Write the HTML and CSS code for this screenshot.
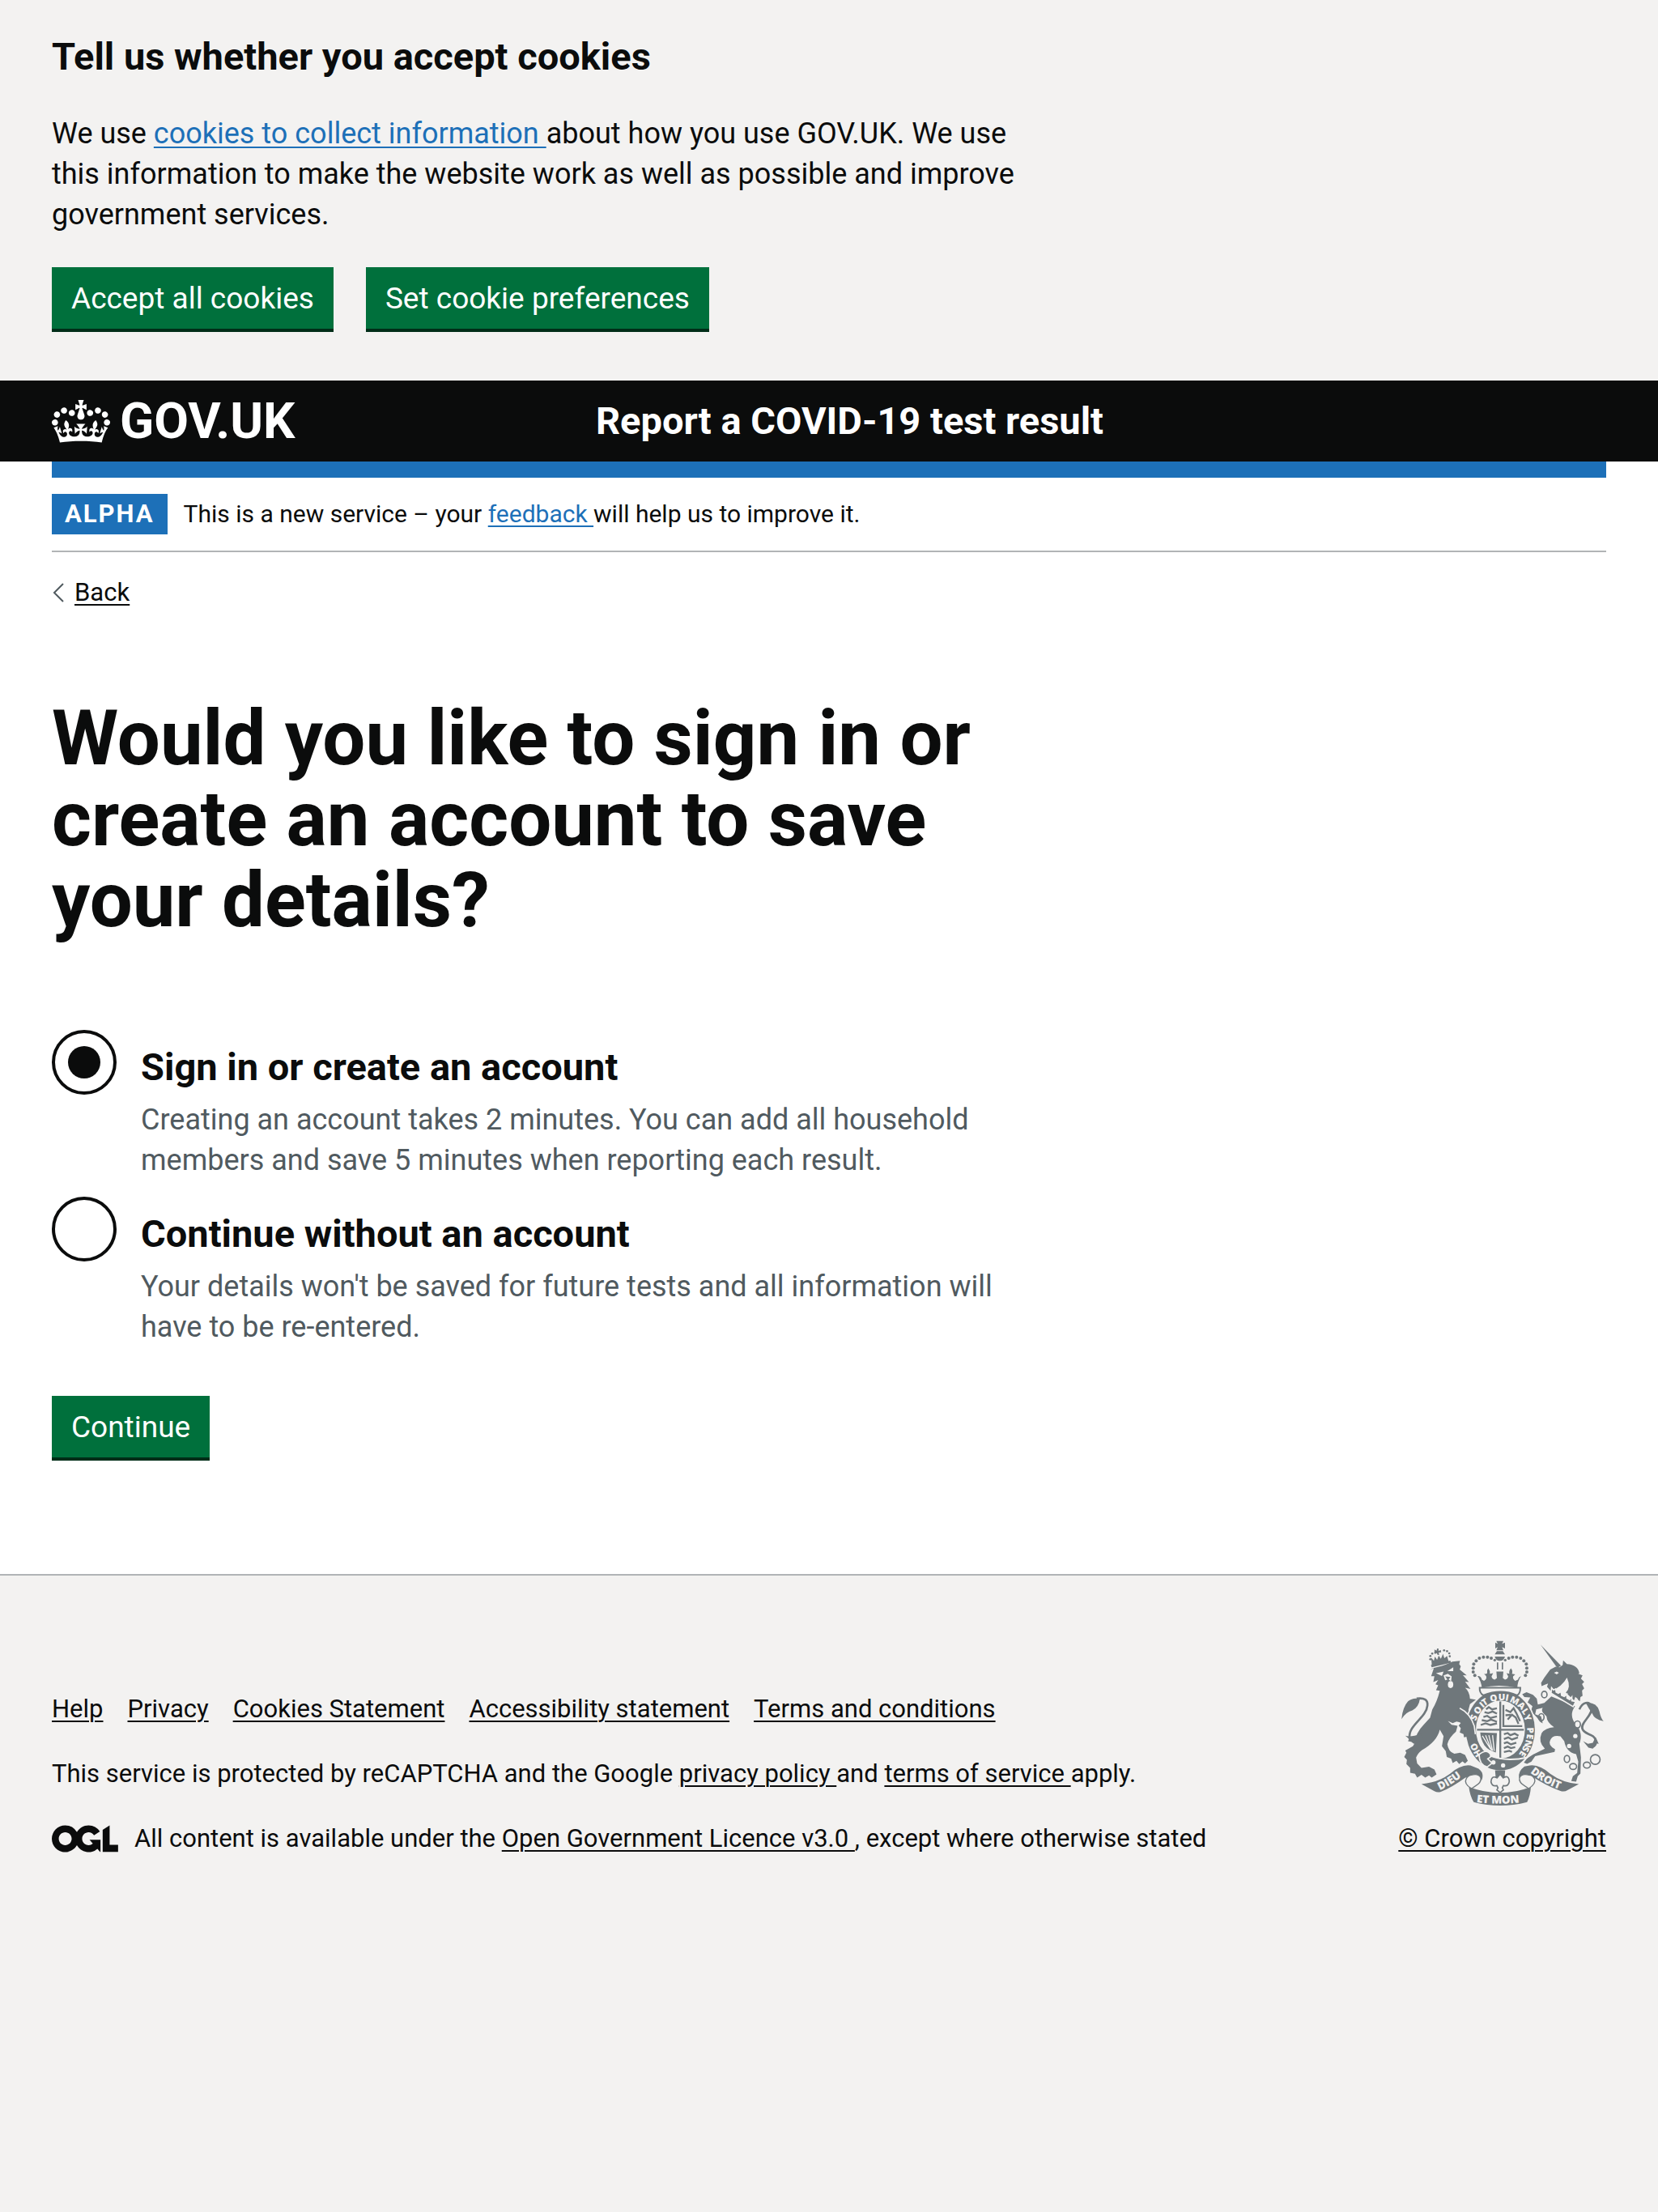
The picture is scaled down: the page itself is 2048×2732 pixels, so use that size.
FILE: index.html
```html
<!DOCTYPE html>
<html lang="en">
<head>
<meta charset="utf-8">
<meta name="viewport" content="width=device-width, initial-scale=1">
<title>Would you like to sign in or create an account to save your details? - GOV.UK</title>
<link rel="stylesheet" href="styles.css">
</head>
<body>
<section class="cookie-banner container" aria-label="Cookie banner">
  <h2 class="heading-m">Tell us whether you accept cookies</h2>
  <p class="body two-thirds">We use <a class="link" href="#">cookies to collect information </a>about how you use GOV.UK. We use this information to make the website work as well as possible and improve government services.</p>
  <div class="button-row">
    <button class="button" type="button">Accept all cookies</button>
    <button class="button" type="button">Set cookie preferences</button>
  </div>
</section>

<header class="header">
  <div class="header-inner container">
    <a class="logo" href="#">
      <svg class="crown" viewBox="0 0 132 97" aria-hidden="true"><path fill="currentColor" fill-rule="evenodd" d="M25 30.2c3.5 1.5 7.7-.2 9.1-3.7 1.5-3.6-.2-7.8-3.9-9.2-3.6-1.4-7.6.3-9.1 3.9-1.4 3.5.3 7.5 3.9 9zM9 39.5c3.6 1.5 7.8-.2 9.2-3.7 1.5-3.6-.2-7.8-3.9-9.1-3.6-1.5-7.6.2-9.1 3.8-1.4 3.5.3 7.5 3.8 9zM4.4 57.2c3.5 1.5 7.7-.2 9.1-3.8 1.5-3.6-.2-7.7-3.9-9.1-3.5-1.5-7.6.3-9.1 3.8-1.4 3.5.3 7.6 3.9 9.1zm38.3-21.4c3.5 1.5 7.7-.2 9.1-3.8 1.5-3.6-.2-7.7-3.9-9.1-3.6-1.5-7.6.3-9.1 3.8-1.3 3.6.4 7.7 3.9 9.1zm64.4-5.6c-3.6 1.5-7.8-.2-9.1-3.7-1.5-3.6.2-7.8 3.8-9.2 3.6-1.4 7.7.3 9.2 3.9 1.3 3.5-.4 7.5-3.9 9zm15.9 9.3c-3.6 1.5-7.7-.2-9.1-3.7-1.5-3.6.2-7.8 3.7-9.1 3.6-1.5 7.7.2 9.2 3.8 1.5 3.5-.3 7.5-3.8 9zm4.7 17.7c-3.6 1.5-7.8-.2-9.2-3.8-1.5-3.6.2-7.7 3.9-9.1 3.6-1.5 7.7.3 9.2 3.8 1.3 3.5-.4 7.6-3.9 9.1zM89.3 35.8c-3.6 1.5-7.8-.2-9.2-3.8-1.4-3.6.2-7.7 3.9-9.1 3.6-1.5 7.7.3 9.2 3.8 1.4 3.6-.3 7.7-3.9 9.1zM69.7 17.7l8.9 4.7V9.3l-8.9 2.8c-.2-.3-.5-.6-.9-.9L72.4 0H59.6l3.5 11.2c-.3.3-.6.5-.9.9l-8.8-2.8v13.1l8.8-4.7c.3.3.6.7.9.9l-5 15.4v.1c-.2.8-.4 1.6-.4 2.4 0 4.1 3.1 7.5 7 8.1h.2c.3 0 .7.1 1 .1.4 0 .7 0 1-.1h.2c4-.6 7.1-4.1 7.1-8.1 0-.8-.1-1.7-.4-2.4V34l-5.1-15.4c.4-.2.7-.6 1-.9zM66 92.8c16.9 0 32.8 1.1 47.1 3.2 4-16.9 8.9-26.7 14-33.5l-9.6-3.4c1 4.9 1.1 7.2 0 10.2-1.5-1.4-3-4.3-4.2-8.7L108.6 76c2.8-2 5-3.2 7.5-3.3-4.4 9.4-10 11.9-13.6 11.2-4.3-.8-6.3-4.6-5.6-7.9 1-4.7 5.7-5.9 8-.5 4.3-8.7-3-11.4-7.6-8.8 7.1-7.2 7.9-13.5 2.1-21.1-8 6.1-8.1 12.3-4.5 20.8-4.7-5.4-12.1-2.5-9.5 6.2 3.4-5.2 7.9-2 7.2 3.1-.6 4.3-6.4 7.8-13.5 7.2-10.3-.9-10.9-8-11.2-13.8 2.5-.5 7.1 1.8 11 7.3L80.2 60c-4.1 4.4-8 5.3-12.3 5.4 1.4-4.4 8-11.6 8-11.6H55.5s6.4 7.2 7.9 11.6c-4.2-.1-8-1-12.3-5.4l1.4 16.4c3.9-5.5 8.5-7.7 10.9-7.3-.3 5.8-.9 12.8-11.1 13.8-7.2.6-12.9-2.9-13.5-7.2-.7-5 3.8-8.3 7.1-3.1 2.7-8.7-4.6-11.6-9.4-6.2 3.7-8.5 3.6-14.7-4.6-20.8-5.8 7.6-5 13.9 2.2 21.1-4.7-2.6-11.9.1-7.7 8.8 2.3-5.5 7.1-4.2 8.1.5.7 3.3-1.3 7.1-5.7 7.9-3.5.7-9-1.8-13.5-11.2 2.5.1 4.7 1.3 7.5 3.3l-4.7-15.4c-1.2 4.4-2.7 7.2-4.3 8.7-1.1-3-.9-5.3 0-10.2l-9.5 3.4c5 6.9 9.9 16.7 14 33.5 14.8-2.1 30.8-3.2 47.7-3.2z"/></svg>
      <span>GOV.UK</span>
    </a>
    <a class="service-name" href="#">Report a COVID-19 test result</a>
  </div>
</header>

<div class="page">
  <div class="container">
    <div class="phase-banner">
      <strong class="tag">ALPHA</strong>
      <p class="phase-text">This is a new service – your <a class="link" href="#">feedback </a>will help us to improve it.</p>
    </div>
    <a class="back-link body-s" href="#">
      <svg class="back-icon" viewBox="0 0 16 24" aria-hidden="true"><path d="M14 1L3 12l11 11" fill="none" stroke="#505a5f" stroke-width="2"/></svg>
      <span>Back</span>
    </a>
    <main class="main two-thirds">
      <form>
        <fieldset class="fieldset">
          <legend><h1 class="heading-xl">Would you like to sign in or create an account to save your details?</h1></legend>
          <div class="radios">
            <div class="radio-item">
              <input class="radio" type="radio" name="account" id="sign-in" aria-describedby="sign-in-hint" checked>
              <div class="radio-text">
                <label class="heading-m" for="sign-in">Sign in or create an account</label>
                <p class="body hint" id="sign-in-hint">Creating an account takes 2 minutes. You can add all household members and save 5 minutes when reporting each result.</p>
              </div>
            </div>
            <div class="radio-item">
              <input class="radio" type="radio" name="account" id="no-account" aria-describedby="no-account-hint">
              <div class="radio-text">
                <label class="heading-m" for="no-account">Continue without an account</label>
                <p class="body hint" id="no-account-hint">Your details won't be saved for future tests and all information will have to be re-entered.</p>
              </div>
            </div>
          </div>
        </fieldset>
        <button class="button" type="button">Continue</button>
      </form>
    </main>
  </div>
</div>

<footer class="footer">
  <div class="footer-inner container">
    <div class="footer-meta">
      <ul class="footer-links body-s">
        <li><a href="#">Help</a></li>
        <li><a href="#">Privacy</a></li>
        <li><a href="#">Cookies Statement</a></li>
        <li><a href="#">Accessibility statement</a></li>
        <li><a href="#">Terms and conditions</a></li>
      </ul>
      <p class="body-s">This service is protected by reCAPTCHA and the Google <a href="#">privacy policy </a>and <a href="#">terms of service </a>apply.</p>
      <div class="licence">
        <svg class="ogl" viewBox="0 0 484 196" role="img" aria-label="Open Government Licence"><path fill="currentColor" d="M421.500 142.800V.1l-50.700 32.300v161.100h112.400v-50.700zm-122.300-9.600A47.120 47.120 0 0 1 221 97.800c0-26 21.100-47.100 47.100-47.100 16.700 0 31.400 8.700 39.700 21.800l42.700-27.200A97.630 97.630 0 0 0 268.100 0c-36.500 0-68.300 20.100-85.100 49.700A98 98 0 0 0 97.800 0C43.900 0 0 43.900 0 97.800s43.900 97.800 97.800 97.800c36.500 0 68.300-20.100 85.100-49.700a97.760 97.760 0 0 0 149.600 25.400l19.400 22.200h3v-87.800h-80l24.300 27.500zM97.800 145c-26 0-47.100-21.100-47.100-47.100s21.100-47.100 47.100-47.100 47.100 21.100 47.100 47.100S123.800 145 97.800 145"/></svg>
        <p class="body-s">All content is available under the <a href="#">Open Government Licence v3.0 </a>, except where otherwise stated</p>
      </div>
    </div>
    <a class="copyright body-s" href="#">
      <svg class="crest" viewBox="84 46 750 616" aria-hidden="true">
        <defs>
          <path id="ribbon-left" d="M226 602Q278 578 330 534"/>
          <path id="ribbon-mid" d="M362 647Q450 658 560 644"/>
          <path id="ribbon-right" d="M561 536Q618 584 690 605"/>
        </defs>
        <!-- lion -->
        <g fill="#6f777b">
          <path d="M193 138l72-17 3 8-72 17z"/>
          <path d="M196 132l-2-22 10 12 4-16 8 12 6-16 8 12 8-18 5 16 10-8 6 22-63 14z"/>
          <path d="M206 80l8 4 2-8 6 1-1 8 9-3 1 8-9 1 2 8-6 1-3-7-8 3z"/>
          <circle cx="191" cy="116" r="4"/><circle cx="191" cy="104" r="4"/><circle cx="198" cy="95" r="4"/><circle cx="209" cy="91" r="4"/><circle cx="242" cy="83" r="4"/><circle cx="253" cy="86" r="4"/><circle cx="261" cy="94" r="4"/><circle cx="263" cy="105" r="4"/>
          <path d="M189 156l12-7q40-8 72-24l28-3-3 12 6 8-4 12 26 22-14-1 22 26-14-2 20 27-20-4q16 14 18 40l22 4-22 17-6 22q20 10 24 30 14 16 16 44l-8 12 2 26-16-4-12 8-4-14-18-4 4-16-10-8 10-14q-10-14-32-18l-14 6-18-8 14 14 22 4-6 22q-26 22-32 46 4 28 26 36l22-4 18 8 10 22-10 10-10-8-12 10-10-12-14 8-6-16-16-6-4-22-14-18 6-38-14-24q-10 44-66 76-16 12-22 28l4 22 16 16 28-4 20 10 8 18-18 12-10-8-14 8-14-10-16 10-8-14-18-4 0-18-14-14 2-16-10-10 8-16-4-8 28-16 6-10q4-40 34-70l24-26 8-30q18-30 28-70l-14-2 8-18-10-4 10-16-18 8 4-22-12 0 10-30z"/>
          <path d="M98 400q22 6 58-8l6 16q-4 16-32 22l-10-8-12-2 4-8z"/>
          <path d="M84 338q4-44 24-66 20-16 44-8-4 30-28 42-24 6-40 32z"/>
          <path d="M140 262q44-6 40 26c-4 46-74 74-66 122q8 10 24 6" fill="none" stroke="#6f777b" stroke-width="8"/>
          <g fill="#f3f2f1">
            <path d="M212 168l28-6-6 16zM254 160l22-14 0 14zM240 176l16-6 14 10-2 18-10-8-12 4z"/>
            <ellipse cx="266" cy="210" rx="10" ry="13"/>
          </g>
          <path d="M246 180l20 2-10 12z"/>
        </g>
        <!-- unicorn -->
        <g fill="#6f777b">
          <path d="M600 62l76 78-14 8z"/>
          <path d="M614 184l22-30 20-10 14 2 12-8 2-18 14 14q40 2 46 34l-4 2 16 6-6 12 12 12-8 8 8 16-8 8 2 20-8 4-2 16-10-8-12 4-30-28q20-20 4-56-18 34-60 50l-14-16 4-12-10 4-14 6-2-12z"/>
          <path d="M640 254l88 36q-24 34 2 66 30 34 14 74l6 50-2 60-10 10-6 20-18-2 6-18 16-12 4-42-8-28q-36-6-44-48l-14-18q-30-6-38 14-10 18 18 34l-2 10-72 16-14 20-16 8-12-4 12-16 22-14 44-22q-26-26-12-58 14-20 46-22-26-16-28-40l-12-12q-8-10-2-20l-24 6-4 18 22 8 6 26-10-6-10-14-24-26 6-18-18-14 10-18-22-2-8-10 16-8 24 10 14 14 4 22 24-6z"/>
          <path d="M641 222l-2 20 82 50 14-28-5-4-4 12-10-2 0-14-8 10-10-6 0-14-10 8-10-4-2-14-10 6-8-4-2-12-8 4z" fill="#6f777b" stroke="#f3f2f1" stroke-width="5"/>
          <path d="M744 302c12-26 36-34 46-10 6 34-46 60-34 84 8 22 46 14 50 46q0 14-14 20" fill="none" stroke="#6f777b" stroke-width="8"/>
          <path d="M768 278q40-4 50 30 6 28 16 38-34-6-42-28-14-20-24-40zM758 420l18 10 18-4 10-22 12 26-8-2-14 20-16-4z"/>
        </g>
        <g fill="#f3f2f1"><circle cx="729" cy="401" r="8"/><circle cx="706" cy="438" r="8"/><circle cx="597" cy="270" r="7"/><path d="M650 166l10-4 8 4-8 6z"/></g>
        <g fill="none" stroke="#6f777b" stroke-width="5">
          <ellipse cx="614" cy="247" rx="10" ry="12"/><ellipse cx="603" cy="331" rx="10" ry="13"/><ellipse cx="737" cy="358" rx="11" ry="13" fill="#f3f2f1"/>
          <ellipse cx="698" cy="486" rx="10" ry="13"/><ellipse cx="721" cy="514" rx="13" ry="11"/><ellipse cx="772" cy="509" rx="13" ry="11"/><circle cx="803" cy="488" r="18"/>
        </g>
        <!-- garter and shield -->
        <ellipse cx="451" cy="379" rx="133" ry="154" fill="#f3f2f1"/>
        <ellipse cx="451" cy="379" rx="128" ry="149" fill="#6f777b"/>
        <ellipse cx="451" cy="377" rx="91" ry="108" fill="#f3f2f1"/>
        <g fill="#6f777b">
          <path d="M447 273h7v210h-7zM364 374h174v7H364z"/>
          <path d="M376 388l62 2-4 72q-28-8-42-26-14-22-16-48z"/>
          <path d="M384 400l30 48M396 398l22 56M408 398l14 58M422 398l6 58" stroke="#f3f2f1" stroke-width="4"/>
        </g>
        <g fill="none" stroke="#6f777b" stroke-width="7">
          <path d="M398 302l10-8 12 8 18-4M392 312l14 4 16-6 16 8M388 330l14-4 12 8 24-6M382 342l20 4 14-6 22 8M378 360l18-6 18 6 24-6"/>
          <path d="M464 394l14-4 10 8 16-6 14 8M464 412l16-6 14 8 22-8M464 428l12-4 14 8 20-6M464 446l14-6 12 6 16-4M464 460l20-4 10 4"/>
          <path d="M462 286v78h70M470 304l18 8 12-14 10 18 14 30M478 340l16-18 14 10 10 24M470 324l20-2"/>
        </g>
        <g class="motto" font-size="34">
          <text transform="translate(383 471) rotate(-118)">HO</text>
          <text transform="translate(360 346) rotate(-68)">S</text>
          <text transform="translate(369 323) rotate(-55)">O</text>
          <text transform="translate(386 298) rotate(-42)">I</text>
          <text transform="translate(391 290) rotate(-32)">T</text>
          <text transform="translate(415 274) rotate(-12)">Q</text>
          <text transform="translate(443 268) rotate(0)">U</text>
          <text transform="translate(468 269) rotate(10)">I</text>
          <text transform="translate(484 273) rotate(26)">M</text>
          <text transform="translate(512 289) rotate(42)">A</text>
          <text transform="translate(528 308) rotate(56)">L</text>
          <text transform="translate(536 328) rotate(66)">Y</text>
          <text transform="translate(550 370) rotate(88)">P</text>
          <text transform="translate(550 393) rotate(97)">E</text>
          <text transform="translate(546 413) rotate(104)">N</text>
          <text transform="translate(538 435) rotate(114)">S</text>
          <text transform="translate(529 453) rotate(122)">E</text>
        </g>
        <!-- lion's foreleg, over the garter -->
        <path d="M290 296q38 12 50 44 16 20 16 50l2 22-12-8-6 6-8-8-16 4-2-12-14-6 4-16-8-10 10-12z" fill="#6f777b"/>
        <path d="M300 298q38 18 54 66l4 30" fill="none" stroke="#f3f2f1" stroke-width="5"/>
        <path d="M372 470q30-26 46 6l-14 10 16 16-18 14q-30-8-30-46z" fill="#6f777b" stroke="#f3f2f1" stroke-width="5"/>
        <path d="M412 474q60 24 140 6" fill="none" stroke="#f3f2f1" stroke-width="6"/>
        <circle cx="425" cy="499" r="8" fill="#f3f2f1"/><circle cx="461" cy="510" r="8" fill="#f3f2f1"/>
        <!-- crown -->
        <path d="M374 222h151q0 22-12 28-60-26-126 0-14-10-13-28z" fill="#f3f2f1" stroke="#6f777b" stroke-width="6"/>
        <g fill="#6f777b">
          <path d="M436 48h26l-5 11 11-5v22l-11-5 5 12h-26l5-12-9 5V54l9 5zM430 98l8-12h22l8 12zM430 106h38q-4 16-19 16t-19-16zM438 128h5v26h-5zM456 128h5v26h-5z"/>
          <path d="M370 178q10 2 12 14l8 4q12-6 8-18l-8-8q8 2 12-2-2-12 4-18 8 10 6 20l12-2-6 12q2 10 12 12l8-6-2-24h26l-2 24 8 6q10-2 12-12l-6-12 10 2q-2-12 6-20 8 8 4 20l12 2-8 8q-2 10 8 16l10-4q2-10 12-14-14 20-14 44-70-16-132 0-2-24-16-44z"/>
          <circle cx="356" cy="176" r="6"/><circle cx="350" cy="163" r="6"/><circle cx="350" cy="149" r="6"/><circle cx="352" cy="134" r="6"/><circle cx="361" cy="122" r="6"/><circle cx="373" cy="112" r="6"/><circle cx="388" cy="108" r="6"/><circle cx="403" cy="108" r="6"/><circle cx="417" cy="112" r="6"/><circle cx="430" cy="119" r="5"/>
          <circle cx="544" cy="176" r="6"/><circle cx="549" cy="163" r="6"/><circle cx="549" cy="149" r="6"/><circle cx="547" cy="134" r="6"/><circle cx="538" cy="122" r="6"/><circle cx="526" cy="112" r="6"/><circle cx="511" cy="108" r="6"/><circle cx="496" cy="108" r="6"/><circle cx="482" cy="112" r="6"/><circle cx="469" cy="119" r="5"/>
        </g>
        <!-- ribbon -->
        <g fill="#6f777b">
          <path d="M158 579q60-4 106-38 40-36 76-31l30 12q22 16 12 42-38-22-62-8-50 36-90 52-12 4-24-2z"/>
          <path d="M742 579q-60-4-106-38-40-36-76-31l-20 4q-24 18-20 42 20-12 44-8 60 40 108 56 16 6 28-2z"/>
          <path d="M334 590q116 44 230 0-2 34-14 56-100 26-198 0-14-22-18-56z"/>
        </g>
        <g fill="#f3f2f1" stroke="#6f777b" stroke-width="4">
          <path d="M342 546q28-8 36 10 4 18-22 32l-12 8q-30-18-20-36 6-12 18-14z"/>
          <path d="M558 546q-28-8-36 10-4 18 22 32l12 8q28-18 22-36-8-14-20-14z"/>
        </g>
        <path d="M434 531h32l-2 24q18-10 20 14-2 20-22 16l-4 8 4 8-12 10-12-10 4-8-4-8q-18 4-22-14 2-24 20-16z" fill="#f3f2f1" stroke="#6f777b" stroke-width="5"/>
        <path d="M433 530h34l-6 30-11-14-11 14z" fill="#6f777b"/>
        <g class="motto" font-size="40">
          <text><textPath href="#ribbon-left">DIEU</textPath></text>
          <text><textPath href="#ribbon-mid">ET MON</textPath></text>
          <text><textPath href="#ribbon-right">DROIT</textPath></text>
        </g>
      </svg>
      <span>© Crown copyright</span>
    </a>
  </div>
</footer>
</body>
</html>
```
FILE: styles.css
```css
* {
  box-sizing: border-box;
}

body {
  margin: 0;
  background: #f3f2f1;
  color: #0b0c0c;
  font-family: Roboto, "Liberation Sans", sans-serif;
}

h1, h2, p, ul {
  margin: 0;
}

a {
  color: inherit;
  text-underline-offset: 4px;
  text-decoration-thickness: 2px;
}

.container {
  padding-left: 64px;
  padding-right: 64px;
}

.two-thirds {
  max-width: 64%;
}

.body {
  font-size: 36px;
  line-height: 50px;
}

.body-s {
  font-size: 31px;
  line-height: 40px;
}

.heading-m {
  font-size: 47px;
  font-weight: 700;
  line-height: 60px;
}

.heading-xl {
  font-size: 94px;
  font-weight: 700;
  line-height: 100px;
}

.link {
  color: #1d70b8;
}

.button {
  padding: 20px 24px 18px;
  border: 0;
  background: #00703c;
  box-shadow: 0 4px 0 #002d18;
  color: #fff;
  font-family: inherit;
  font-size: 37px;
  line-height: 38px;
}

.cookie-banner {
  padding-top: 40px;
  padding-bottom: 64px;
}

.cookie-banner .body {
  margin: 40px 0;
}

.button-row {
  display: flex;
  gap: 40px;
}

.header {
  background: #0b0c0c;
  color: #fff;
}

.header a {
  color: inherit;
  text-decoration: none;
}

.header-inner {
  display: grid;
  grid-template-columns: 35% 1fr;
  align-items: center;
  min-height: 100px;
}

.logo {
  display: flex;
  align-items: center;
  gap: 12px;
  font-size: 62px;
  font-weight: 700;
  line-height: 60px;
}

.crown {
  width: 72px;
  height: 53px;
}

.service-name {
  font-size: 47px;
  font-weight: 700;
  line-height: 60px;
}

.page {
  padding-bottom: 144px;
  border-bottom: 2px solid #b1b4b6;
  background: #fff;
}

.phase-banner {
  display: flex;
  align-items: center;
  gap: 20px;
  padding: 20px 0;
  border-top: 20px solid #1d70b8;
  border-bottom: 2px solid #b1b4b6;
}

.tag {
  padding: 0 16px;
  background: #1d70b8;
  color: #fff;
  font-size: 31px;
  letter-spacing: 2px;
  line-height: 50px;
}

.phase-text {
  font-size: 30px;
  line-height: 40px;
}

.back-link {
  display: inline-flex;
  align-items: center;
  gap: 12px;
  margin-top: 30px;
}

.back-link span {
  text-decoration: underline;
  text-decoration-thickness: 2px;
}

.back-icon {
  width: 16px;
  height: 24px;
}

.main {
  padding-top: 110px;
}

.fieldset {
  margin: 0;
  padding: 0;
  border: 0;
}

.fieldset legend {
  padding: 0;
}

.radios {
  display: grid;
  gap: 20px;
  margin: 110px 0 60px;
}

.radio-item {
  display: grid;
  grid-template-columns: 80px 1fr;
  gap: 30px;
}

.radio {
  width: 80px;
  height: 80px;
  margin: 0;
  padding: 16px;
  border: 4px solid #0b0c0c;
  border-radius: 50%;
  appearance: none;
}

.radio:checked {
  background: #0b0c0c content-box;
}

.radio-text {
  padding-top: 16px;
}

.radio-text label {
  display: block;
}

.hint {
  margin-top: 10px;
  color: #505a5f;
}

.footer {
  padding: 80px 0;
}

.footer-inner {
  display: flex;
  align-items: flex-end;
  justify-content: space-between;
}

.footer-meta {
  display: grid;
  gap: 40px;
}

.footer-links {
  display: flex;
  flex-wrap: wrap;
  gap: 30px;
  padding: 0;
  list-style: none;
}

.licence {
  display: flex;
  align-items: center;
  gap: 20px;
}

.ogl {
  width: 82px;
  height: 34px;
}

.copyright {
  display: grid;
  justify-items: center;
  gap: 20px;
}

.crest {
  width: 250px;
  height: 205px;
}

.motto {
  fill: #f3f2f1;
  font-family: "Open Sans", sans-serif;
  font-weight: 800;
}
```
